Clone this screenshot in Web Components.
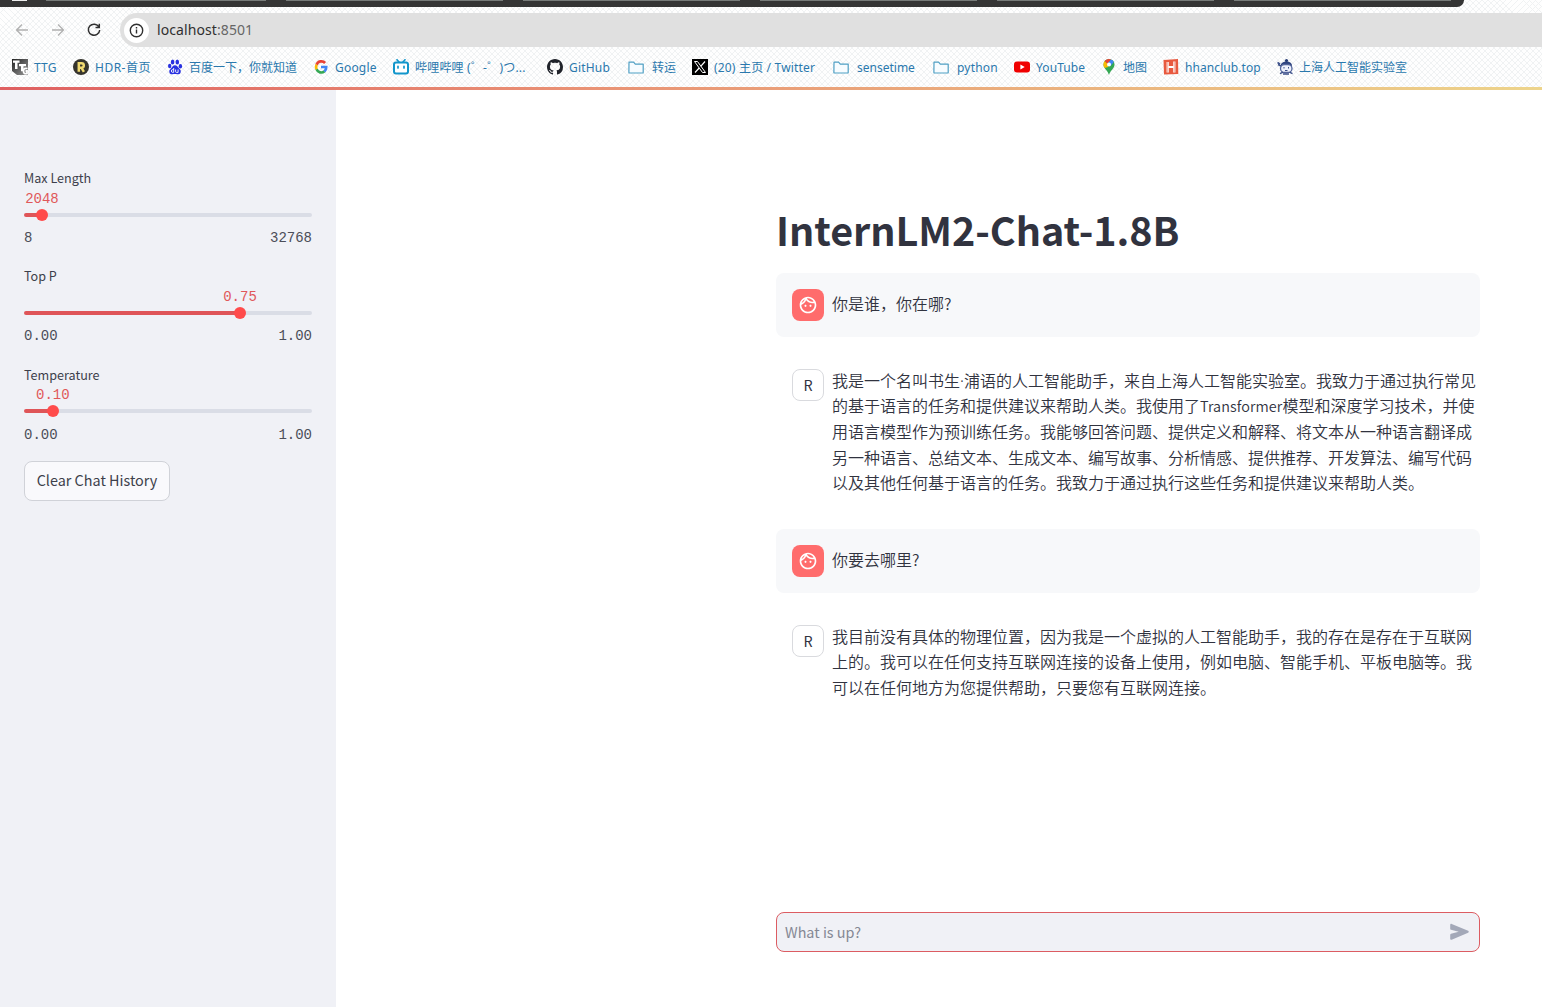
<!DOCTYPE html>
<html lang="zh-CN">
<head>
<meta charset="utf-8">
<title>InternLM2-Chat-1.8B</title>
<style>
html, body { margin: 0; height: 100%; overflow: hidden; }
body { background: #fff; color: #31333f; font: 16px/25.6px "Noto Sans CJK SC", sans-serif; }
</style>
</head>
<body>
<chat-app></chat-app>
<script>
const define = (name, html, setup) => customElements.define(name, class extends HTMLElement {
  constructor() {
    super();
    const t = document.createElement('template');
    t.innerHTML = html;
    this.attachShadow({ mode: 'open' }).append(t.content.cloneNode(true));
  }
  connectedCallback() { if (setup) setup(this, this.shadowRoot); }
});

const folder = '<path d="M1 3.2h4.6l1.7 1.9h7.9v8.3q0 .6-.6.6H1.5q-.6 0-.6-.6z" fill="#f7fcff" stroke="#4f9fc4" stroke-width="1.2" stroke-linejoin="round"/>';
const icons = {
  ttg: '<defs><linearGradient id="g" x2="1" y2="1"><stop stop-color="#222"/><stop offset="1" stop-color="#999"/></linearGradient></defs><path d="M0 0h16v16H0z" fill="url(#g)"/><path d="M1 1.500h6.500v2.200H5.500V10H3V3.700H1zM7 5h7v2.200h-2.500v5H9V7.200H7z" fill="#fff"/><path d="M15.500 9.500q-4-1-4 2.500t3.500 2.500v-2.500h-1.500" fill="none" stroke="#fff" stroke-width="1.800"/><path d="M0 12l5 4H0z" fill="#fff"/>',
  hdr: '<circle cx="8" cy="8" r="8" fill="#36342d"/><path d="M5.800 12.800V4.300h2.700q2.300 0 2.300 2.200T8.500 8.700H6m2.400 0 2.500 4.100" fill="none" stroke="#f0d970" stroke-width="2.500"/>',
  baidu: '<g fill="#2932e1"><ellipse cx="5.600" cy="3" rx="1.800" ry="2.600"/><ellipse cx="10.300" cy="3" rx="1.800" ry="2.600"/><ellipse cx="2.700" cy="7" rx="1.700" ry="2.200"/><ellipse cx="13.400" cy="7.200" rx="1.700" ry="2.200"/><path d="M8 6.300c2 0 2.700 1.700 4 3s2.200 2.200 1.600 4.100c-.7 2.300-3.200 1.700-5.600 1.700s-4.900.6-5.600-1.700C1.900 11.500 2.900 10.600 4.100 9.300S6 6.300 8 6.300"/></g><path d="M6.700 9v4.300H5.300q-.9 0-.9-1.300t.9-1.300h1.400M8.600 10.500v2q0 .9.900.9h1.600v-2.900" fill="none" stroke="#fff" stroke-width=".9"/>',
  google: '<g fill="none" stroke-width="2.700"><path d="M12.100 4A5 5 0 0 0 3.600 5.700" stroke="#e94235"/><path d="M3.600 5.600a5.300 5.300 0 0 0 0 4.800" stroke="#fabb05"/><path d="M3.600 10.300a5 5 0 0 0 7.900 2" stroke="#34a853"/><path d="M8 8h5.200q0 2.800-1.800 4.400" stroke="#4285f4"/></g>',
  bili: '<path d="M4 .8 6 3M12 .8 10 3" stroke="#1296cb" stroke-width="1.700" stroke-linecap="round"/><rect x="1" y="3.500" width="14" height="11" rx="2" fill="#fff" stroke="#1296cb" stroke-width="2"/><path d="M5 7.300v1.600M11 7.300v1.600" stroke="#1296cb" stroke-width="1.700" stroke-linecap="round"/>',
  github: '<path fill="#20232a" d="M8 0C3.580 0 0 3.580 0 8c0 3.540 2.290 6.530 5.470 7.590.4.070.55-.17.55-.38 0-.19-.01-.82-.01-1.490-2.010.37-2.530-.49-2.690-.94-.09-.23-.48-.94-.82-1.130-.28-.15-.68-.52-.01-.53.63-.01 1.080.58 1.230.82.72 1.210 1.870.87 2.330.66.07-.52.28-.87.51-1.070-1.780-.2-3.640-.89-3.640-3.950 0-.87.31-1.590.82-2.150-.08-.2-.36-1.020.08-2.120 0 0 .67-.21 2.200.82.640-.18 1.320-.27 2-.27s1.360.09 2 .27c1.530-1.040 2.200-.82 2.200-.82.44 1.100.16 1.920.08 2.120.51.56.82 1.270.82 2.150 0 3.070-1.870 3.750-3.650 3.950.29.25.54.73.54 1.480 0 1.070-.01 1.930-.01 2.200 0 .21.15.46.55.38A8.01 8.01 0 0 0 16 8c0-4.420-3.580-8-8-8"/>',
  folder,
  x: '<path d="M0 0h16v16H0z"/><path d="M2.500 2.500h3l8 11h-3z" fill="none" stroke="#fff"/><path d="M13 2.500 8.700 7.300M7.200 9 3 13.500" stroke="#fff" stroke-width="1.200"/>',
  youtube: '<rect y="2.500" width="16" height="11" rx="3" fill="#f00000"/><path d="m6.400 5.600 4.300 2.400-4.300 2.400z" fill="#fff"/>',
  maps: '<path d="M8 0a5.500 5.500 0 0 0-5.500 5.500c0 4 4 5.500 5.500 10.500 1.500-5 5.500-6.500 5.500-10.500A5.500 5.500 0 0 0 8 0" fill="#34a853"/><path d="M3.700 2 7 5 3.900 9.300A6 6 0 0 1 3.700 2" fill="#fbbc04"/><path d="M8 0a5.500 5.500 0 0 0-4.300 2L6.500 5 10 .4Q9 0 8 0" fill="#ea4335"/><path d="M10 .4 6.500 4.800 9.500 7l3.300-4A5.500 5.500 0 0 0 10 .4" fill="#4285f4"/><path d="M3.700 9 7 5v3z" fill="#fbbc04"/><circle cx="8" cy="5.500" r="2" fill="#fff"/>',
  hh: '<path d="M.5 1 15 0l.3 15L1 15.500z" fill="#e8593f"/><path d="M4.700 3v10.500M11.300 2.500v11M4.500 8h7" stroke="#fff" stroke-width="2.200" fill="none"/><path d="M4.700 3v10.500M11.300 2.500v11" stroke="#e8593f" stroke-width=".5"/>',
  lab: '<circle cx="9.500" cy="1.600" r="1.600" fill="#253a73"/><path d="M3.500 7Q4 2.500 9.500 2.500T15 7z" fill="#2b417d"/><rect x="3.500" y="5.500" width="11.500" height="8" rx="4" fill="#eef1fb" stroke="#53659b" stroke-width="1.300"/><path d="M1 5.500 4 7M.5 3.500 3 5M3 14.700l3-1.500M15.500 14.700l-3-1.500M6 15h6" stroke="#3c5089" stroke-width="1.500"/><path d="M7 8v1.500M11.500 8v1.500M8 11.500h2.500" stroke="#3c5089"/>'
};

define('bookmark-link', `<style>
:host { display: flex; align-items: center; height: 16px; flex: none; color: #2a78ad; font: 12px/16px "Noto Sans", "Noto Sans CJK SC", sans-serif; white-space: nowrap; }
svg { width: 16px; height: 16px; flex: none; margin-right: 6px; }
span { padding-top: 2px; }
:host([icon=folder]) svg { margin-right: 8px; }
</style><svg viewBox="0 0 16 16"></svg><span><slot></slot></span>`, (el, root) => {
  root.querySelector('svg').innerHTML = icons[el.getAttribute('icon')];
  el.style.width = el.getAttribute('span') + 'px';
  el.style.letterSpacing = (el.getAttribute('track') || 0) + 'px';
});

define('browser-bar', `<style>
:host { display: flex; flex-direction: column; height: 90px; flex: none; box-sizing: border-box;
  background: repeating-linear-gradient(45deg, #f0f2f3 0 .7px, transparent .7px 4.240px), repeating-linear-gradient(-45deg, #f0f2f3 0 .7px, transparent .7px 4.240px), #fefefe; }
.tabs { width: 1464px; height: 7px; flex: none; border-radius: 0 0 12px 0; background: linear-gradient(90deg, transparent 0 12px, #eee 12px 27px, transparent 27px 46px, #777b79 46px 1455px, transparent 1455px) 0 0/100% 1px no-repeat, #353535; overflow: hidden; }
.tabs i { display: block; height: 1px; width: 1198px; margin-left: 266px; background: repeating-linear-gradient(90deg, #353535 0 20px, transparent 20px 237px); }
nav { display: flex; align-items: center; height: 34px; margin-top: 6px; }
.nav { width: 16px; height: 16px; margin-left: 14px; } .nav + .nav { margin-left: 20px; }
.url { flex: 1; height: 34px; margin-left: 18px; background: #e0e0e0; border-radius: 17px 0 0 17px; display: flex; align-items: center; padding-left: 4px; font: 14px/20px "Noto Sans", sans-serif; color: #303030; letter-spacing: .09px; }
.url svg { width: 25px; height: 25px; margin-right: 8px; } .url b { font-weight: 400; color: #666; }
.marks { display: flex; padding: 12px 0 0 12px; height: 28px; }
.line { height: 3px; background: linear-gradient(90deg, #df6061, #e99275 38%, #ebb57f 72%, #edd48b); }
</style>
<div class="tabs"><i></i></div>
<nav>
<svg class="nav" viewBox="0 0 16 16" fill="none" stroke="#b0b0b0" stroke-width="1.300"><path d="M14 8H2.500M8 2.500 2.500 8 8 13.500"/></svg>
<svg class="nav" viewBox="0 0 16 16" fill="none" stroke="#b0b0b0" stroke-width="1.300"><path d="M2 8h11.500M8 2.500 13.500 8 8 13.500"/></svg>
<svg class="nav" viewBox="0 0 16 16" fill="none" stroke="#303030" stroke-width="1.500"><path d="M13 5A5.700 5.500 0 1 0 13.700 8M13.300 1.800v3.800H9.500"/></svg>
<div class="url"><svg viewBox="0 0 25 25"><circle cx="12.500" cy="12.500" r="12.500" fill="#fff"/><circle cx="12.500" cy="12.500" r="6.200" fill="none" stroke="#303030" stroke-width="1.400"/><path d="M12.500 11.500v4M12.500 9v1.400" stroke="#303030" stroke-width="1.400"/></svg><span>localhost<b>:8501</b></span></div>
</nav>
<div class="marks">
<bookmark-link icon="ttg" span="61" track=".2">TTG</bookmark-link>
<bookmark-link icon="hdr" span="94" track=".5">HDR-首页</bookmark-link>
<bookmark-link icon="baidu" span="146">百度一下，你就知道</bookmark-link>
<bookmark-link icon="google" span="80" track=".2">Google</bookmark-link>
<bookmark-link icon="bili" span="154" track=".2">哔哩哔哩 (゜-゜)つ...</bookmark-link>
<bookmark-link icon="github" span="81" track=".2">GitHub</bookmark-link>
<bookmark-link icon="folder" span="64">转运</bookmark-link>
<bookmark-link icon="x" span="141" track=".18">(20) 主页 / Twitter</bookmark-link>
<bookmark-link icon="folder" span="100">sensetime</bookmark-link>
<bookmark-link icon="folder" span="81" track=".2">python</bookmark-link>
<bookmark-link icon="youtube" span="87" track=".1">YouTube</bookmark-link>
<bookmark-link icon="maps" span="62">地图</bookmark-link>
<bookmark-link icon="hh" span="114" track=".08">hhanclub.top</bookmark-link>
<bookmark-link icon="lab" span="140">上海人工智能实验室</bookmark-link>
</div>
<div class="line"></div>`);

define('range-slider', `<style>
:host { display: flex; flex-direction: column; height: 98.200px; }
.label { font-size: 12.600px; line-height: 20.200px; color: #3d3f4b; }
:host(:last-of-type) .label { padding-top: 1px; margin-bottom: -1px; }
.value, .ends { font: 14px/20px "Liberation Mono", monospace; }
.value { color: #e0585a; width: max-content; margin: .8px 0 0 var(--p); transform: translateX(-50%); }
.track { position: relative; height: 4px; margin: 4px 0 11.200px; border-radius: 2px; background: linear-gradient(90deg, #df5558 var(--p), #dadde6 var(--p)); }
.track i { position: absolute; left: var(--p); top: -4px; width: 12px; height: 12px; margin-left: -6px; border-radius: 50%; background: #ff4b4b; }
.ends { display: flex; justify-content: space-between; color: #4b4d58; }
</style><div class="label"><slot></slot></div><div class="value"></div><div class="track"><i></i></div><div class="ends"><span></span><span></span></div>`, (el, root) => {
  el.style.setProperty('--p', el.getAttribute('at'));
  root.querySelector('.value').textContent = el.getAttribute('value');
  const s = root.querySelectorAll('.ends span');
  s[0].textContent = el.getAttribute('min');
  s[1].textContent = el.getAttribute('max');
});

define('side-bar', `<style>
:host { display: flex; flex-direction: column; width: 336px; flex: none; box-sizing: border-box; padding: 78px 24px 0; background: #f0f1f6; }
button { width: 146px; height: 40px; margin-top: -1.600px; padding: 0 0 2px; border: 1px solid #d0d2d8; border-radius: 8px; background: #f9f9fc; color: #3d3f4b; font: 14.400px/24px "Noto Sans CJK SC", sans-serif; flex: none; }
</style>
<range-slider at="6.230%" value="2048" min="8" max="32768">Max Length</range-slider>
<range-slider at="75%" value="0.75" min="0.00" max="1.00">Top P</range-slider>
<range-slider at="10%" value="0.10" min="0.00" max="1.00">Temperature</range-slider>
<button>Clear Chat History</button>`);

define('chat-message', `<style>
:host { display: flex; gap: 8px; padding: 16px; box-sizing: border-box; border-radius: 8px; min-height: 64px; }
:host([from=user]) { background: #f7f8fa; }
:host([from=bot]) { padding-bottom: 17.200px; }
.avatar { width: 32px; height: 32px; flex: none; box-sizing: border-box; display: flex; align-items: center; justify-content: center; border-radius: 8px; border: 1px solid #d9dade; background: #fff; font-size: 14.400px; line-height: 30px; }
:host([from=user]) .avatar { background: #ff6c6c; border: 0; }
svg { width: 20px; height: 20px; }
.text { flex: 1; min-width: 0; white-space: nowrap; font-family: "Noto Sans CJK SC", sans-serif; font-weight: 350; margin-top: 2px; }
:host([from=bot]) .text { margin-top: -1.200px; }
</style><div class="avatar"></div><div class="text"><slot></slot></div>`, (el, root) => {
  root.querySelector('.avatar').innerHTML = el.getAttribute('from') === 'user'
    ? '<svg viewBox="0 0 24 24" fill="#fff"><path d="M10.250 13c0 .69-.56 1.250-1.250 1.250S7.750 13.690 7.750 13s.56-1.250 1.250-1.250 1.250.56 1.250 1.250zM15 11.750c-.69 0-1.250.56-1.250 1.250s.56 1.250 1.250 1.250 1.250-.56 1.250-1.250-.56-1.250-1.250-1.250zm7 .25c0 5.520-4.480 10-10 10S2 17.520 2 12 6.480 2 12 2s10 4.480 10 10zM10.660 4.120C12.060 6.440 14.600 8 17.500 8c.46 0 .91-.05 1.340-.12C17.440 5.560 14.900 4 12 4c-.46 0-.91.05-1.340.12zM4.420 9.470c1.710-.97 3.030-2.550 3.660-4.440C6.370 6 5.050 7.580 4.420 9.470zM20 12c0-.78-.12-1.530-.33-2.240-.7.15-1.420.24-2.170.24-3.130 0-5.920-1.440-7.760-3.690C8.690 8.870 6.600 10.880 4 11.860c.01.04 0 .09 0 .14 0 4.410 3.590 8 8 8s8-3.590 8-8z"/></svg>'
    : '<span>R</span>';
});

define('chat-input', `<style>
:host { display: flex; align-items: center; justify-content: space-between; height: 40px; flex: none; box-sizing: border-box; border: 1px solid #dc5c62; border-radius: 8px; background: #f0f1f6; padding: 0 6px 0 8px; color: #858894; font-size: 14.400px; }
svg { width: 25.600px; height: 25.600px; fill: #a3a8b8; }
</style><span><slot></slot></span><svg viewBox="0 0 24 24"><path d="M3 5.510v3.710c0 .46.31.86.76.97L11 12l-7.240 1.810c-.45.11-.76.51-.76.97v3.710c0 .72.73 1.200 1.390.92l15.420-6.490c.82-.34.82-1.500 0-1.840L4.390 4.580C3.730 4.310 3 4.790 3 5.510z"/></svg>`);

define('chat-app', `<style>
:host { display: flex; flex-direction: column; height: 100vh; }
.page { display: flex; flex: 1; min-height: 0; }
main { flex: 1; min-width: 0; display: flex; flex-direction: column; padding: 112px 62px 55px 440px; }
h1 { margin: 0; height: 53px; font: 700 39.500px/53px "Noto Sans CJK SC", sans-serif; letter-spacing: -.03px; white-space: nowrap; }
.log { display: flex; flex-direction: column; gap: 16px; margin-top: 18px; flex: 1; }
.em { font-size: 14.400px; line-height: 0; letter-spacing: .09px; } .dot { font-family: "Noto Sans", sans-serif; line-height: 0; }
</style>
<browser-bar></browser-bar>
<div class="page">
<side-bar></side-bar>
<main>
<h1>InternLM2-Chat-1.8B</h1>
<div class="log">
<chat-message from="user">你是谁，你在哪?</chat-message>
<chat-message from="bot">我是一个名叫书生<span class="dot">·</span>浦语的人工智能助手，来自上海人工智能实验室。我致力于通过执行常见<br>的基于语言的任务和提供建议来帮助人类。我使用了<span class="em">Transformer</span>模型和深度学习技术，并使<br>用语言模型作为预训练任务。我能够回答问题、提供定义和解释、将文本从一种语言翻译成<br>另一种语言、总结文本、生成文本、编写故事、分析情感、提供推荐、开发算法、编写代码<br>以及其他任何基于语言的任务。我致力于通过执行这些任务和提供建议来帮助人类。</chat-message>
<chat-message from="user">你要去哪里?</chat-message>
<chat-message from="bot">我目前没有具体的物理位置，因为我是一个虚拟的人工智能助手，我的存在是存在于互联网<br>上的。我可以在任何支持互联网连接的设备上使用，例如电脑、智能手机、平板电脑等。我<br>可以在任何地方为您提供帮助，只要您有互联网连接。</chat-message>
</div>
<chat-input>What is up?</chat-input>
</main>
</div>`);
</script>
</body>
</html>
